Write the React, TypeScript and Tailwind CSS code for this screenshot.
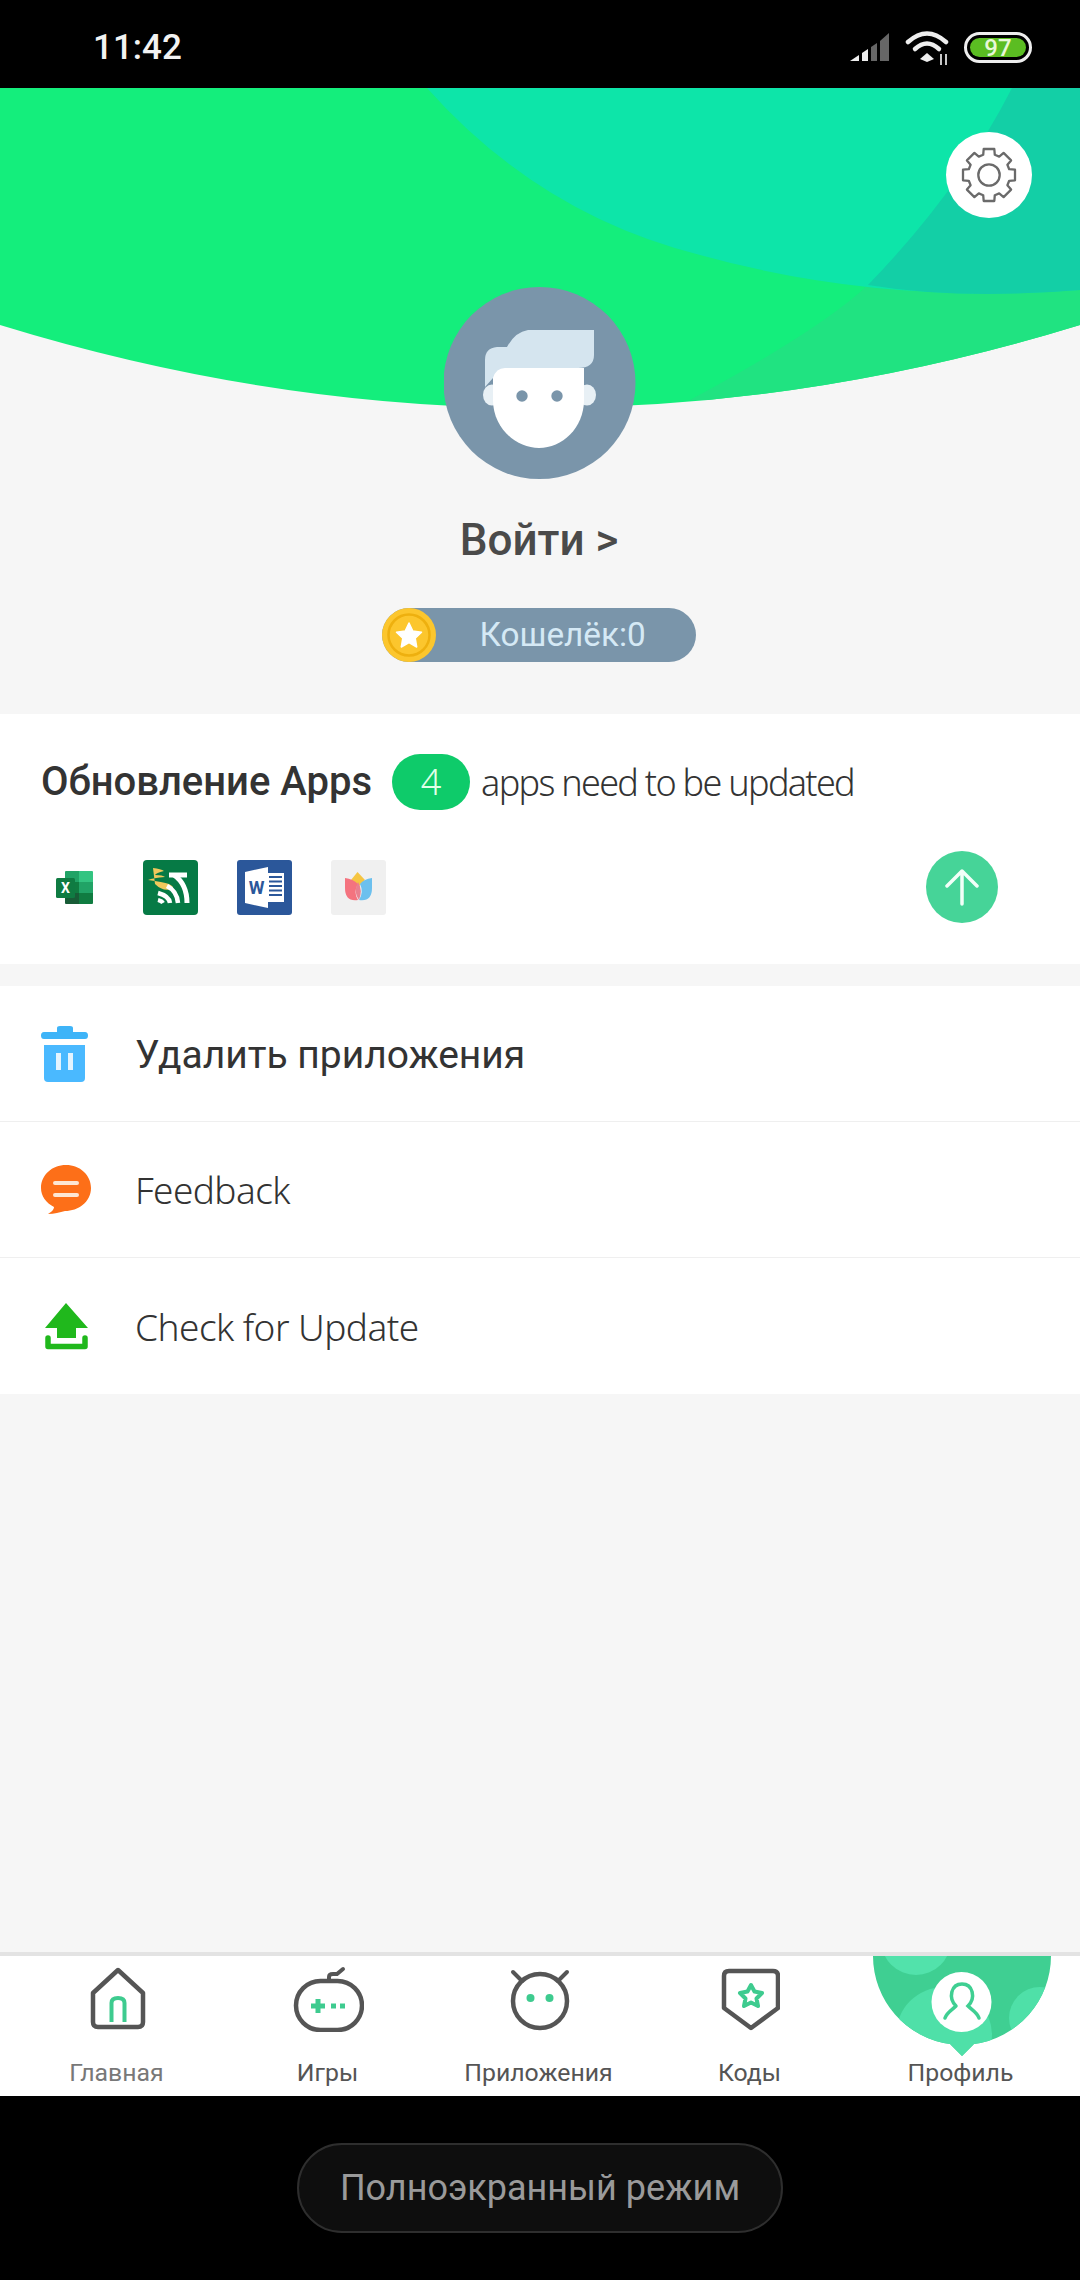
import type { ReactNode } from "react";

const NAV_ITEMS = [
  { label: "Главная", icon: <HomeIcon />, color: "text-[#787878]" },
  { label: "Игры", icon: <GameIcon />, color: "text-[#555]" },
  { label: "Приложения", icon: <RobotIcon />, color: "text-[#555]" },
  { label: "Коды", icon: <CodeIcon />, color: "text-[#555]" },
  { label: "Профиль", icon: <ProfileIcon />, color: "text-[#555]" },
];

function HomeIcon() {
  return (
    <svg viewBox="-1 0 60 66" className="w-[60px] h-[66px]">
      <path d="M30 4 L55 27 V56 Q55 61 50 61 H10 Q5 61 5 56 V27 Z" fill="none" stroke="#555" strokeWidth="4.5" strokeLinejoin="round" />
      <path d="M23.5 56 V37 Q23.5 32 30 32 Q36.5 32 36.5 37 V56" fill="none" stroke="#3ecb8f" strokeWidth="4" />
    </svg>
  );
}

function GameIcon() {
  return (
    <svg viewBox="-1 0 72 66" className="w-[72px] h-[66px]">
      <path d="M36 15 V11 Q36 8 40 8 H44 L50 3" fill="none" stroke="#555" strokeWidth="4" strokeLinecap="round" />
      <rect x="3" y="15" width="66" height="49" rx="24.5" fill="none" stroke="#555" strokeWidth="4.5" />
      <path d="M25 33 V47 M18 40 H32" stroke="#3ecb8f" strokeWidth="5" />
      <rect x="38" y="37.5" width="5" height="5" fill="#3ecb8f" />
      <rect x="47" y="37.5" width="5" height="5" fill="#3ecb8f" />
    </svg>
  );
}

function RobotIcon() {
  return (
    <svg viewBox="-1 0 66 66" className="w-[66px] h-[66px]">
      <circle cx="33" cy="35" r="27" fill="none" stroke="#555" strokeWidth="4.5" />
      <path d="M6 6 L15 15 M60 6 L51 15" stroke="#555" strokeWidth="4" strokeLinecap="round" />
      <circle cx="23.5" cy="32" r="4" fill="#3ecb8f" />
      <circle cx="42.5" cy="32" r="4" fill="#3ecb8f" />
    </svg>
  );
}

function CodeIcon() {
  return (
    <svg viewBox="-1 0 60 66" className="w-[60px] h-[66px]">
      <path d="M8 5 H52 Q57 5 57 10 V42 L30 62 L3 42 V10 Q3 5 8 5 Z" fill="none" stroke="#555" strokeWidth="4.5" strokeLinejoin="round" />
      <path d="M30 19 L33.5 25.5 L41 27 L35.5 32.5 L37 40 L30 36.5 L23 40 L24.5 32.5 L19 27 L26.5 25.5 Z" fill="none" stroke="#3ecb8f" strokeWidth="4" strokeLinejoin="round" />
    </svg>
  );
}

function ProfileIcon() {
  return (
    <svg viewBox="-1 0 180 102" className="absolute left-1/2 top-0 -translate-x-1/2 w-[180px] h-[102px]">
      <defs>
        <clipPath id="profile-clip">
          <path d="M1 0 H179 A89 89 0 0 1 102 88 L90 100 L78 88 A89 89 0 0 1 1 0 Z" />
        </clipPath>
      </defs>
      <g clipPath="url(#profile-clip)">
        <rect x="-1" width="181" height="102" fill="#3fcf92" />
        <circle cx="44" cy="-16" r="35" fill="#52e2ab" />
        <circle cx="72" cy="79" r="48" fill="#4fe0a8" />
        <circle cx="168" cy="62" r="31" fill="#4fe0a8" />
      </g>
      <circle cx="89.5" cy="46" r="30" fill="white" />
      <path d="M84 50 C76 42 79 28 90 28 C101 28 104 42 96 50 C100 54 105 56 107 62 M84 50 C80 54 75 56 73 62" fill="none" stroke="#3fcf92" strokeWidth="3.5" strokeLinecap="round" />
    </svg>
  );
}

function StatusIcons() {
  return (
    <svg viewBox="850 28 184 40" className="w-[184px] h-[40px]">
      <path d="M850 61 L859 55 V61 Z" fill="#eee" />
      <path d="M862 53 L868 49 V61 H862 Z" fill="#eee" />
      <path d="M871 47 L877 43 V61 H871 Z" fill="#666" />
      <path d="M880 41 L889 33 V61 H880 Z" fill="#666" />
      <path d="M908 42 Q927 25 946 42" fill="none" stroke="#eee" strokeWidth="4.5" strokeLinecap="round" />
      <path d="M915 49 Q927 38 939 49" fill="none" stroke="#eee" strokeWidth="4.5" strokeLinecap="round" />
      <path d="M920 59 L927 53 L934 59 L927 62 Z" fill="#eee" />
      <path d="M941 54 V65 M946 54 V65" stroke="#ddd" strokeWidth="1.8" />
      <rect x="965.5" y="33.5" width="65" height="28" rx="14" fill="none" stroke="#eee" strokeWidth="3" />
      <rect x="970" y="38" width="56" height="19" rx="9.5" fill="#5bbd22" />
      <text x="998" y="55.5" textAnchor="middle" fontFamily="Roboto, sans-serif" fontSize="24" fontWeight="500" fill="#e8f8d8">97</text>
    </svg>
  );
}

function HeroBackground() {
  return (
    <svg viewBox="0 88 1080 626" className="absolute inset-0 w-full h-full">
      <defs>
        <clipPath id="hero-clip">
          <path d="M0 88 H1080 V325 Q810 408 540 408 Q270 408 0 325 Z" />
        </clipPath>
      </defs>
      <g clipPath="url(#hero-clip)">
        <rect x="0" y="88" width="1080" height="340" fill="#14ee7c" />
        <path d="M690 400 Q820 330 868 285 Q960 190 1012 88 H1080 V400 Z" fill="#20e381" />
        <path d="M427 88 Q540 215 700 255 Q880 305 1080 290 V88 Z" fill="#0de5a9" />
        <path d="M868 285 Q960 190 1012 88 H1080 V290 Q960 300 868 285 Z" fill="#13cfa6" />
      </g>
    </svg>
  );
}

function Avatar() {
  return (
    <svg viewBox="444 287 192 192" className="w-[192px] h-[192px] relative">
      <circle cx="539.5" cy="383" r="96" fill="#7a95aa" />
      <ellipse cx="492" cy="395" rx="9" ry="10.5" fill="#e8f0f5" />
      <ellipse cx="587" cy="395" rx="9" ry="10.5" fill="#e8f0f5" />
      <path d="M493 368 H584 V400 C584 428 562 448 539 448 C516 448 493 428 493 400 Z" fill="white" />
      <path d="M594 330 H528 Q515 332 507 347 H497 Q485 348 485 360 V387 L493 378 Q496 368 505 368 H578 Q594 368 594 355 Z" fill="#d5e5ef" />
      <circle cx="522" cy="396" r="5.7" fill="#7a95aa" />
      <circle cx="557" cy="396" r="5.7" fill="#7a95aa" />
    </svg>
  );
}

// 8 tooth outline, centre 32,32
function gearPath() {
  const pts: string[] = [];
  for (let i = 0; i < 8; i++) {
    const a = (i * Math.PI) / 4 - Math.PI / 2;
    const step = [
      [21, -0.28],
      [26.5, -0.2],
      [26.5, 0.2],
      [21, 0.28],
    ];
    for (const [r, d] of step) {
      pts.push(`${(32 + r * Math.cos(a + d)).toFixed(1)} ${(32 + r * Math.sin(a + d)).toFixed(1)}`);
    }
  }
  return `M${pts.join(" L")} Z`;
}

function GearIcon() {
  return (
    <svg viewBox="0 0 64 64" className="w-[64px] h-[64px]">
      <path d={gearPath()} fill="none" stroke="#6a6a6a" strokeWidth="2.3" strokeLinejoin="round" />
      <circle cx="32" cy="32" r="10.7" fill="none" stroke="#6a6a6a" strokeWidth="2.3" />
    </svg>
  );
}

function Coin() {
  return (
    <svg viewBox="0 0 54 54" className="w-[54px] h-[54px] shrink-0">
      <circle cx="27" cy="27" r="27" fill="#fcc62d" />
      <circle cx="27" cy="27" r="20.5" fill="none" stroke="#eeb00f" strokeWidth="2.5" />
      <path d="M27 15 L30.8 23 L39.5 24.2 L33.2 30.2 L34.7 39 L27 34.7 L19.3 39 L20.8 30.2 L14.5 24.2 L23.2 23 Z" fill="white" stroke="white" strokeLinejoin="round" strokeWidth="1.5" />
    </svg>
  );
}

function ExcelIcon() {
  return (
    <svg viewBox="0 0 55 55" className="w-[55px] h-[55px]">
      <path d="M16 12 Q16 11 17 11 H30 V22 H16 Z" fill="#21a366" />
      <path d="M30 11 H43 Q44 11 44 12 V22 H30 Z" fill="#33c481" />
      <rect x="16" y="22" width="14" height="11" fill="#107c41" />
      <rect x="30" y="22" width="14" height="11" fill="#21a366" />
      <path d="M16 33 H30 V44 H17 Q16 44 16 43 Z" fill="#185c37" />
      <path d="M30 33 H44 V43 Q44 44 43 44 H30 Z" fill="#107c41" />
      <rect x="7" y="18" width="19" height="20" rx="1.5" fill="#0f7b42" />
      <text x="16.5" y="33" textAnchor="middle" fontFamily="Roboto, sans-serif" fontSize="14" fontWeight="700" fill="white">X</text>
    </svg>
  );
}

function GreenAppIcon() {
  return (
    <svg viewBox="0 0 55 55" className="w-[55px] h-[55px]">
      <rect width="55" height="55" rx="4" fill="#067a45" />
      <path d="M10 8 Q18 9 21 11 Q13 13 12 15 Q20 15 22 17 Q10 18 5 20 Q20 22 26 24 Q32 27 29 29 Q20 32 12 24" fill="#f1c85c" />
      <path d="M26 15 H44" stroke="white" strokeWidth="5" />
      <path d="M31 15 Q44 24 44 43" fill="none" stroke="white" strokeWidth="5" />
      <path d="M24 26 Q34 31 35 43" fill="none" stroke="white" strokeWidth="4.5" />
      <path d="M15 33 Q26 36 27 43" fill="none" stroke="white" strokeWidth="4.5" />
      <path d="M15 40 Q19 41 20 43" fill="none" stroke="white" strokeWidth="4" />
    </svg>
  );
}

function WordIcon() {
  return (
    <svg viewBox="0 0 55 55" className="w-[55px] h-[55px]">
      <rect width="55" height="55" rx="3" fill="#2b579a" />
      <path d="M8 12 L31 7 V48 L8 43 Z" fill="white" />
      <rect x="31" y="13" width="16" height="29" fill="white" />
      <path d="M32 17 H45 M32 21.5 H45 M32 26 H45 M32 30.5 H45 M32 35 H45" stroke="#2b579a" strokeWidth="1.8" />
      <text x="19.5" y="34" textAnchor="middle" fontFamily="Roboto, sans-serif" fontSize="18" fontWeight="700" fill="#2b579a">W</text>
    </svg>
  );
}

function TulipIcon() {
  return (
    <svg viewBox="0 0 55 55" className="w-[55px] h-[55px]">
      <rect width="55" height="55" rx="3" fill="#f0f0f0" />
      <path d="M26.5 12 L34 20 L27 27 L20 20 Z" fill="#f5c542" />
      <path d="M14 18 Q22 19 27 24 Q22 32 27 40 Q14 42 14 28 Z" fill="#f4737f" />
      <path d="M41 18 Q33 19 29 24 Q33 32 28 40 Q41 42 41 28 Z" fill="#6cc0ee" />
      <path d="M27 22 Q32 30 28 40 Q22 32 27 22 Z" fill="#e9808f" />
    </svg>
  );
}

function TrashIcon() {
  return (
    <svg viewBox="0 0 48 60" className="w-[48px] h-[60px]">
      <path d="M16 4 Q16 2 19 2 H29 Q32 2 32 4 V8 H44 Q47 8 47 11.5 Q47 15 44 15 H3 Q0 15 0 11.5 Q0 8 3 8 H16 Z" fill="#3eb4f8" />
      <path d="M3 21 H44 V54 Q44 58 40 58 H7 Q3 58 3 54 Z" fill="#4ab9ff" />
      <rect x="15" y="29" width="5" height="17" fill="#e4f4ff" />
      <rect x="27" y="29" width="5" height="17" fill="#e4f4ff" />
    </svg>
  );
}

function BubbleIcon() {
  return (
    <svg viewBox="0 0 52 52" className="w-[52px] h-[52px]">
      <path d="M26 1 C40 1 51 11 51 24 C51 38 38 47 25 47 C20 48 14 50 8 50 C11 48 14 46 14 43 C6 39 1 32 1 24 C1 11 12 1 26 1 Z" fill="#fd6f18" />
      <path d="M15 19 H37 M15 31 H37" stroke="#fde6d3" strokeWidth="4" strokeLinecap="round" />
    </svg>
  );
}

function UpdateIcon() {
  return (
    <svg viewBox="0 0 46 48" className="w-[46px] h-[48px]">
      <path d="M22 1 L44 26 H32 V36 H13 V26 H1 Z" fill="#20b81c" />
      <path d="M4 36 V44.5 H41 V36" fill="none" stroke="#20b81c" strokeWidth="5.5" strokeLinejoin="round" strokeLinecap="round" />
    </svg>
  );
}

function MenuRow({ icon, label, textClass, last }: { icon: ReactNode; label: string; textClass: string; last?: boolean }) {
  return (
    <div className={`flex items-center h-[136px] ${last ? "" : "border-b border-[#efefef]"}`}>
      <div className="w-[135px] flex items-center">{icon}</div>
      <span className={`text-[#333] ${textClass}`}>{label}</span>
    </div>
  );
}

export default function App() {
  return (
    <div className="w-[1080px] h-[2280px] flex flex-col bg-black overflow-hidden">
      {/* Status bar */}
      <div className="h-[88px] shrink-0 flex items-center justify-between pl-[93px] pr-[46px] pt-[8px] bg-black">
        <span className="text-[35px] font-medium text-[#f2f2f2] font-['Roboto',sans-serif]">11:42</span>
        <StatusIcons />
      </div>

      <div className="flex-1 flex flex-col bg-[#f6f6f6]">
        {/* Header */}
        <div className="relative h-[626px] shrink-0 flex flex-col items-center pt-[199px]">
          <HeroBackground />
          <button className="absolute right-[48px] top-[44px] w-[86px] h-[86px] rounded-full bg-white flex items-center justify-center">
            <GearIcon />
          </button>
          <Avatar />
          <div className="relative mt-[31px] mr-[2px] text-[44px] leading-[60px] font-medium text-[#4a4a4a] font-['Roboto',sans-serif]">Войти &gt;</div>
          <div className="relative mt-[38px] mr-[3px] w-[314px] h-[54px] rounded-full bg-[#7a95aa] flex items-center">
            <Coin />
            <span className="ml-[44px] text-[33.3px] text-[#d5e9f5] font-['Roboto',sans-serif]">Кошелёк:0</span>
          </div>
        </div>

        {/* Updates card */}
        <div className="h-[250px] shrink-0 bg-white pl-[41px] pr-[42px] pt-[40px]">
          <div className="flex items-center h-[56px]">
            <span className="text-[40px] font-medium text-[#333] font-['Roboto',sans-serif]">Обновление Apps</span>
            <span className="ml-[20px] w-[78px] h-[56px] rounded-full bg-[#0ecb6a] flex items-center justify-center text-[36px] font-light text-[#e0ffe8] font-['Noto_Sans',sans-serif]">4</span>
            <span className="ml-[11px] pt-[2px] text-[36px] font-light text-[#333] font-['Noto_Sans',sans-serif] tracking-[-1.7px]">apps need to be updated</span>
          </div>
          <div className="flex items-center mt-[41px] h-[72px]">
            <div className="flex gap-[39px] ml-[8px]">
              <ExcelIcon />
              <GreenAppIcon />
              <WordIcon />
              <TulipIcon />
            </div>
            <div className="ml-auto mr-[40px] w-[72px] h-[72px] rounded-full bg-[#46d498] flex items-center justify-center">
              <svg viewBox="0 0 34 38" className="w-[34px] h-[38px]">
                <path d="M17 36 V3 M2 18 L17 3 L32 18" fill="none" stroke="#f2fff8" strokeWidth="3.5" strokeLinecap="round" strokeLinejoin="round" />
              </svg>
            </div>
          </div>
        </div>

        {/* Menu */}
        <div className="mt-[22px] bg-white">
          <MenuRow icon={<div className="pl-[41px]"><TrashIcon /></div>} label="Удалить приложения" textClass="pt-[3px] text-[39px] font-['Roboto',sans-serif]" />
          <MenuRow icon={<div className="pl-[40px]"><BubbleIcon /></div>} label="Feedback" textClass="pt-[1px] text-[37px] font-light font-['Noto_Sans',sans-serif] tracking-[-0.6px]" />
          <MenuRow icon={<div className="pl-[44px]"><UpdateIcon /></div>} label="Check for Update" textClass="pt-[1px] text-[37px] font-light font-['Noto_Sans',sans-serif] tracking-[-0.55px]" last />
        </div>

        <div className="flex-1" />

        {/* Bottom nav */}
        <div className="h-[144px] shrink-0 bg-white border-t-[4px] border-[#e3e3e3] grid grid-cols-5 pl-[11px] pr-[14px]">
          {NAV_ITEMS.map(item => (
            <div key={item.label} className="relative flex flex-col items-center">
              <div className="h-[102px] pt-[10px] flex justify-center">{item.icon}</div>
              <span className={`relative text-[24.8px] leading-[30px] font-['Roboto',sans-serif] ${item.color}`}>{item.label}</span>
            </div>
          ))}
        </div>
      </div>

      {/* System bar */}
      <div className="h-[184px] shrink-0 bg-black flex justify-center pt-[47px]">
        <div className="w-[486px] h-[90px] rounded-full bg-[#0e0e0e] border-2 border-[#2e2e2e] flex items-center justify-center text-[36px] text-[#9a9a9a] font-['Roboto',sans-serif]">
          Полноэкранный режим
        </div>
      </div>
    </div>
  );
}
